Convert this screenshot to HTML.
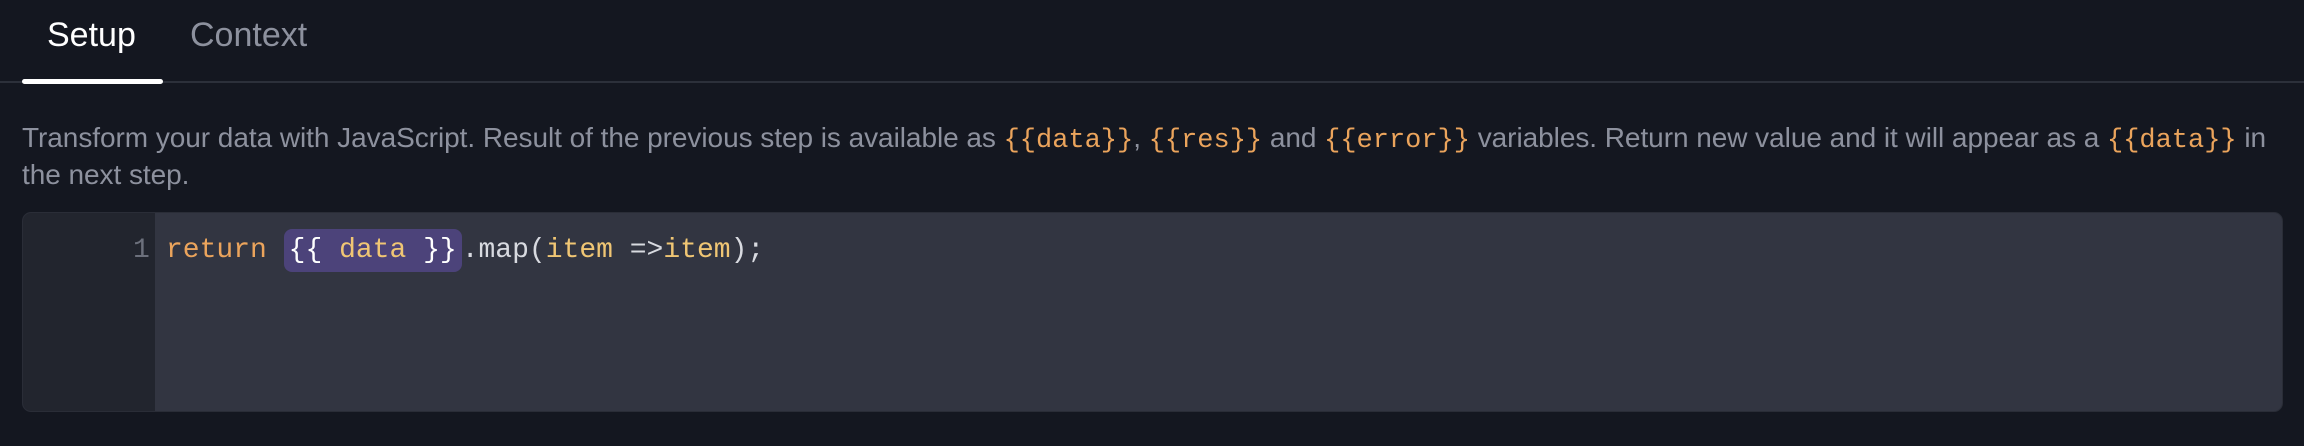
<!DOCTYPE html>
<html><head><meta charset="utf-8"><style>
html,body{margin:0;padding:0;background:#141720;width:2304px;height:446px;overflow:hidden;font-family:"Liberation Sans",sans-serif}
.tab{position:absolute;top:14px;font-size:34px;font-weight:500;line-height:42px}
.divider{position:absolute;left:0;top:81px;width:2304px;height:2px;background:#2c303a}
.ul{position:absolute;left:22px;top:79px;width:141px;height:5px;border-radius:3px;background:#fff}
.desc{position:absolute;left:22px;top:121px;width:2275px;font-size:28px;line-height:34px;color:#8d919e;letter-spacing:-0.05px}
.o{color:#eba45c;font-family:"Liberation Mono",monospace;font-size:27px;letter-spacing:0}
.ed{position:absolute;left:22px;top:212px;width:2261px;height:200px;border-radius:9px;background:#323541;overflow:hidden;border:1px solid #2a2d37;box-sizing:border-box}
.gut{position:absolute;left:0;top:0;width:132px;height:100%;background:#22252e}
.code{position:absolute;top:18px;font-family:"Liberation Mono",monospace;font-size:28px;line-height:40px;white-space:pre;color:#d8dae0}
.hl{background:#4c437a;border-radius:8px;padding:6px 5px}
</style></head><body>
<div class="tab" style="left:47px;color:#fff">Setup</div>
<div class="tab" style="left:190px;color:#8d919e">Context</div>
<div class="divider"></div>
<div class="ul"></div>
<div class="desc">Transform your data with JavaScript. Result of the previous step is available as <span class="o">{{data}}</span>, <span class="o">{{res}}</span> and <span class="o">{{error}}</span> variables. Return new value and it will appear as a <span class="o">{{data}}</span> in<br>the next step.</div>
<div class="ed">
<div class="gut"></div>
<div class="code" style="left:110px;color:#6c707c">1</div>
<div class="code" style="left:143px"><span style="color:#eba45c">return</span> <span class="hl"><span style="color:#fff">{{</span> <span style="color:#f0c674">data</span> <span style="color:#fff">}}</span></span>.map(<span style="color:#f0c674">item</span> =&gt;<span style="color:#f0c674">item</span>);</div>
</div>
</body></html>
